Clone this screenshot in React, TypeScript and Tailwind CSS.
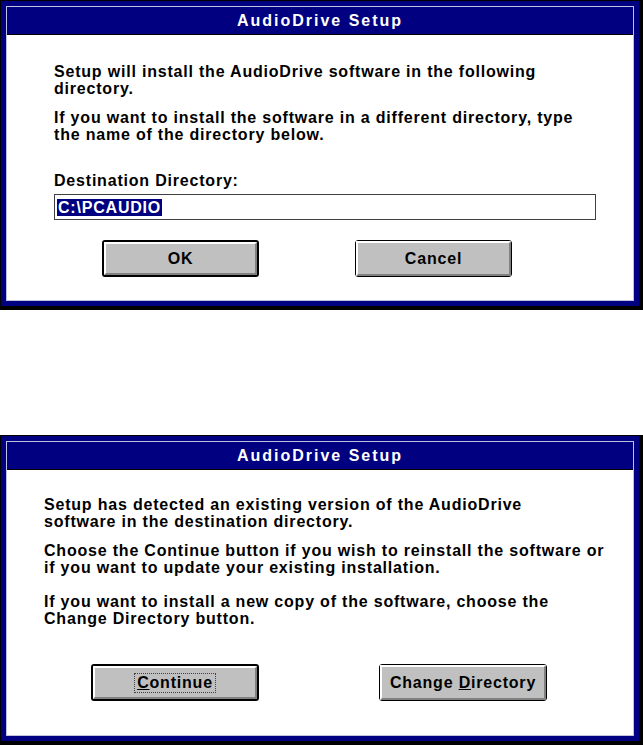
import React from "react";

const font = { fontFamily: '"Liberation Sans", Arial, sans-serif' };

function Frame({ children, title }: { children: React.ReactNode; title: string }) {
  return (
    <div className="h-[310px] w-[643px] bg-black pt-px pl-px pr-[4px] pb-[4px] flex">
      <div className="flex-1 bg-[#000080] p-[5px] flex">
        <div className="flex-1 border border-[#c0c0e0] flex flex-col bg-white">
          <div className="h-[28px] bg-[#000080] border-b border-black flex items-center justify-center text-white font-bold text-[16px] tracking-[2px]">
            {title}
          </div>
          <div className="flex-1 flex flex-col text-black font-bold text-[16px] tracking-[0.8px] leading-[17px]">{children}</div>
        </div>
      </div>
    </div>
  );
}

function Btn({
  children,
  def,
  w,
}: {
  children: React.ReactNode;
  def?: boolean;
  w: string;
}) {
  return (
    <div
      className={
        (def ? "border-2 " : "border ") +
        "border-black rounded-[3px] h-[37px] flex " +
        w
      }
    >
      <div className="flex-1 bg-[#c0c0c0] border-t-2 border-l-2 border-white border-b-2 border-r-2 border-b-[#808080] border-r-[#808080] flex items-center justify-center">
        {children}
      </div>
    </div>
  );
}

export default function App() {
  return (
    <div className="w-[643px] h-[745px] bg-white flex flex-col" style={font}>
      <Frame title="AudioDrive Setup">
        <div className="pl-[47px] pt-[28px]">
          <p>
            Setup will install the AudioDrive software in the following
            <br />
            directory.
          </p>
          <p className="mt-[12px]">
            If you want to install the software in a different directory, type
            <br />
            the name of the directory below.
          </p>
          <p className="mt-[29px]">Destination Directory:</p>
          <div className="mt-[5px] w-[542px] h-[26px] border border-[#404040] flex items-center pl-[2px]">
            <span className="bg-[#000080] text-white px-px leading-[17px]">C:\PCAUDIO</span>
          </div>
        </div>
        <div className="flex pl-[95px] gap-[96px] mt-[20px]">
          <Btn def w="w-[157px]">OK</Btn>
          <Btn w="w-[157px]">Cancel</Btn>
        </div>
      </Frame>
      <div className="h-[126px]" />
      <Frame title="AudioDrive Setup">
        <div className="pl-[37px] pt-[26px]">
          <p>
            Setup has detected an existing version of the AudioDrive
            <br />
            software in the destination directory.
          </p>
          <p className="mt-[12px]">
            Choose the Continue button if you wish to reinstall the software or
            <br />
            if you want to update your existing installation.
          </p>
          <p className="mt-[17px]">
            If you want to install a new copy of the software, choose the
            <br />
            Change Directory button.
          </p>
        </div>
        <div className="flex pl-[84px] gap-[120px] mt-[37px]">
          <Btn def w="w-[168px]">
            <span className="border border-dotted border-[#404040] px-[2px] leading-[18px]">
              <span className="underline">C</span>ontinue
            </span>
          </Btn>
          <Btn w="w-[168px]">
            <span>
              Change <span className="underline">D</span>irectory
            </span>
          </Btn>
        </div>
      </Frame>
    </div>
  );
}
